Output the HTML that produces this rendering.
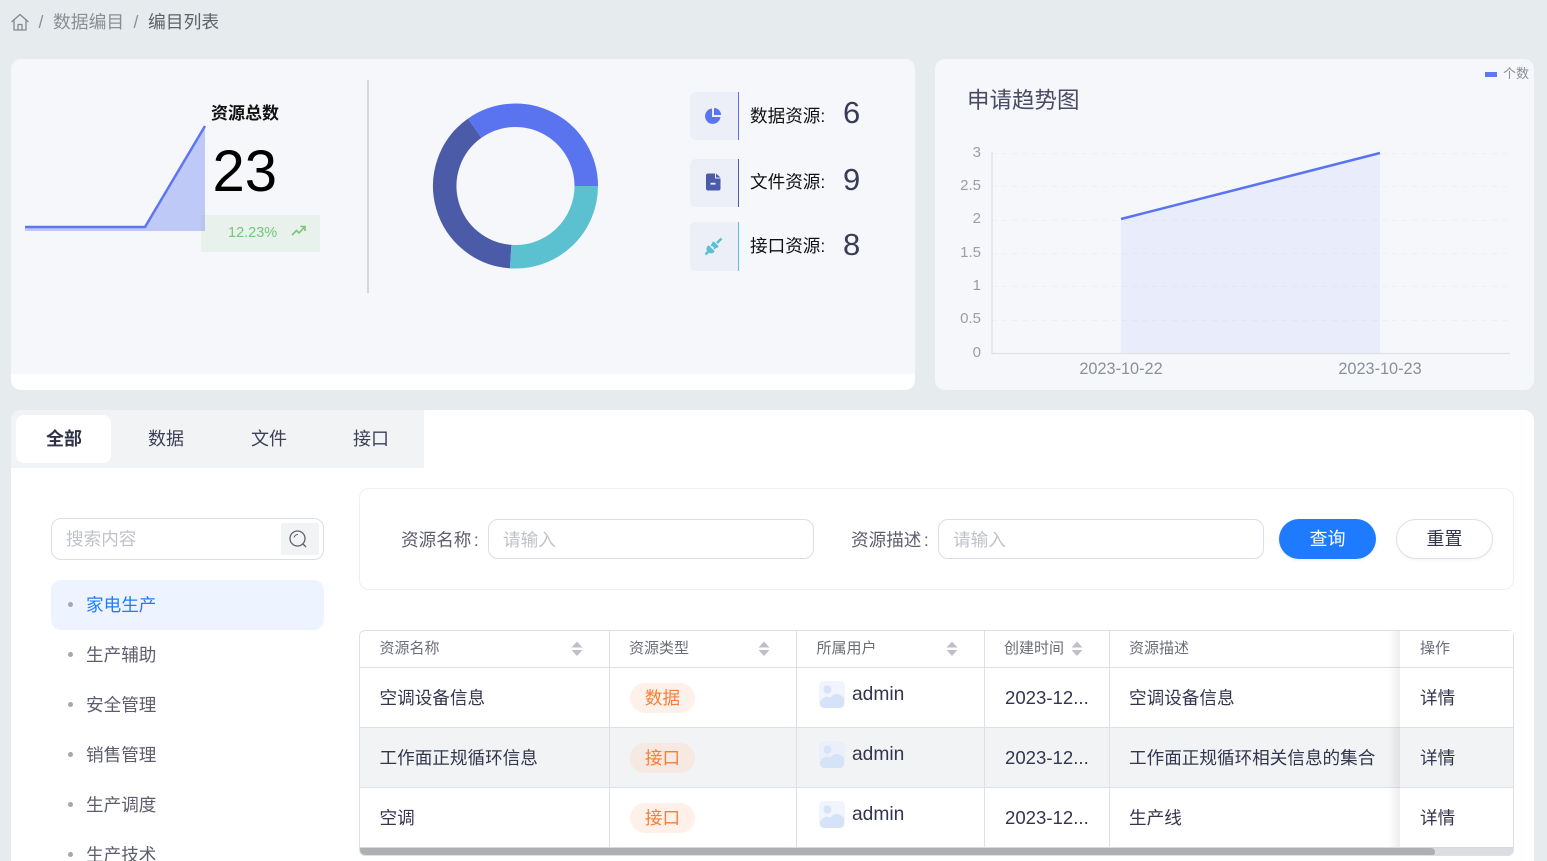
<!DOCTYPE html>
<html lang="zh-CN">
<head>
<meta charset="utf-8">
<title>编目列表</title>
<style>
html,body{margin:0;padding:0;width:1547px;height:861px;overflow:hidden;background:#e6ebee;}
body{position:relative;font-family:"Liberation Sans","Noto Sans CJK SC",sans-serif;color:#33354f;}
.a{position:absolute;box-sizing:border-box;}
.t{position:absolute;white-space:nowrap;line-height:24px;height:24px;font-size:17.6px;}
.h{font-size:15px;color:#6b6d78;}
.n{color:#5c5e6e;}
.dot{position:absolute;left:68px;width:5px;height:5px;border-radius:50%;background:#a4a7b0;}
.lb{color:#111;}
.num{font-size:31px;color:#3a3b57;line-height:36px;height:36px;}
.ic{position:absolute;left:690px;width:48px;background:#eceff7;border-radius:6px 0 0 6px;}
.tag{position:absolute;left:630px;width:65px;height:30px;border-radius:15px;text-align:center;line-height:30px;font-size:17.6px;color:#fb7d33;background:#fff1ea;}
.vl{position:absolute;width:1px;background:#dfdfe9;}
.hl{position:absolute;left:360px;width:1153px;height:1px;background:#dfdfe6;}
.ph{color:#c0c2c9;}
.c{margin-left:2.5px;}
</style>
</head>
<body>

<!-- breadcrumb -->
<svg class="a" style="left:10px;top:12px" width="20" height="20" viewBox="0 0 20 20" fill="none" stroke="#85888f" stroke-width="1.3" stroke-linejoin="round"><path d="M1.5 10 10 2.5 18.5 10"/><path d="M4 8v10h12V8"/><path d="M8 18v-5.5h4V18"/></svg>
<span class="t" style="left:38.500px;top:10px;color:#8d8f96">/</span>
<span class="t n" style="left:53px;top:10px;color:#8c8e95;font-size:17.8px">数据编目</span>
<span class="t" style="left:133.500px;top:10px;color:#8d8f96">/</span>
<span class="t" style="left:148px;top:10px;color:#60626a;font-size:17.8px">编目列表</span>

<!-- stats card -->
<div class="a" style="left:11px;top:59px;width:904px;height:331px;background:#fff;border-radius:10px;overflow:hidden"><div style="height:315px;background:#f5f7fb"></div></div>
<div class="a" style="left:201px;top:215px;width:119px;height:37px;background:#e8f1ec"></div>
<svg class="a" style="left:0;top:59px" width="368" height="200" viewBox="0 59 368 200">
<path d="M25 227H145L205 126V231H25Z" fill="#5a74f0" fill-opacity=".35"/>
<path d="M25 227H145L205 126" fill="none" stroke="#5e77f0" stroke-width="2.5"/>
</svg>
<span class="t" style="left:211px;top:102px;font-size:17px;font-weight:bold;color:#111">资源总数</span>
<span class="t" style="left:212.500px;top:140px;font-size:58px;line-height:64px;height:64px;color:#000">23</span>
<span class="t" style="left:228px;top:221px;font-size:14.500px;color:#74c777">12.23%</span>
<svg class="a" style="left:291px;top:224px" width="15" height="14" viewBox="0 0 15 14" fill="none" stroke="#74c777" stroke-width="1.6"><path d="M1 11 5.5 6.5 8 9 13.5 3"/><path d="M9.5 2.5H14V7"/></svg>
<div class="a" style="left:367px;top:80px;width:2px;height:213px;background:#d5d7df"></div>

<svg class="a" style="left:420px;top:90px" width="190" height="190" viewBox="420 90 190 190" fill="none" stroke-width="23.5">
<path d="M586.25 186A70.75 70.75 0 0 0 474.7 128.2" stroke="#5a74f0"/>
<path d="M474.7 128.2A70.75 70.75 0 0 0 510.7 256.6" stroke="#4c5ba8"/>
<path d="M510.7 256.6A70.75 70.75 0 0 0 586.25 186" stroke="#5bc0cf"/>
</svg>

<div class="ic" style="top:92px;height:48px;border-right:1.5px solid #5a74f0"></div>
<div class="ic" style="top:159px;height:48px;border-right:1.5px solid #4c5ba8"></div>
<div class="ic" style="top:222px;height:49px;border-right:1.5px solid #5bc0cf"></div>
<svg class="a" style="left:704px;top:107px" width="18" height="18" viewBox="0 0 18 18"><path d="M8 1.5A7.7 7.7 0 1 0 16.4 10H8Z" fill="#5a74f0"/><path d="M10 1V8H17A7 7 0 0 0 10 1Z" fill="#5a74f0"/></svg>
<svg class="a" style="left:706px;top:173px" width="15" height="18" viewBox="0 0 15 18"><path d="M2 .5H9V5.5H14.5V15.5A2 2 0 0 1 12.500 17.500H2A2 2 0 0 1 0 15.500V2.500A2 2 0 0 1 2 .5Z" fill="#4c5ba8"/><path d="M10 .5 14.500 4.500H10Z" fill="#4c5ba8"/><rect x="4.500" y="9.800" width="5" height="1.800" fill="#eceff7"/></svg>
<svg class="a" style="left:704px;top:237px" width="19" height="19" viewBox="0 0 19 19" fill="#5bc0cf" stroke="#5bc0cf"><path d="M9.500 5.500 13.500 9.500Q11.500 11 9.500 9 7.800 7.300 9.500 5.500Z" stroke-width="2" stroke-linejoin="round"/><path d="M13 6 17.500 1.500" stroke-width="2.500" fill="none"/><path d="M4.500 9.500 9.500 14.500Q7 16.500 4.500 14 2.500 12 4.500 9.500Z" stroke-width="2" stroke-linejoin="round"/><path d="M5 14 1.500 17.500" stroke-width="2.500" fill="none"/><path d="M7 9 8.500 7.500M10 12 11.500 10.500" stroke-width="1.500" fill="none"/></svg>

<span class="t lb" style="left:750px;top:104px">数据资源<span class="c" style="margin-left:0">:</span></span>
<span class="t num" style="left:843px;top:95px">6</span>
<span class="t lb" style="left:750px;top:170px">文件资源<span class="c" style="margin-left:0">:</span></span>
<span class="t num" style="left:843px;top:162px">9</span>
<span class="t lb" style="left:750px;top:234px">接口资源<span class="c" style="margin-left:0">:</span></span>
<span class="t num" style="left:843px;top:227px">8</span>

<!-- trend card -->
<div class="a" style="left:935px;top:59px;width:599px;height:331px;background:#f5f7fb;border-radius:10px"></div>
<span class="t" style="left:967px;top:87px;font-size:22.500px;line-height:28px;height:28px;color:#4a4b63">申请趋势图</span>
<div class="a" style="left:1485px;top:72px;width:12px;height:5px;background:#5f79f2"></div>
<span class="t" style="left:1503px;top:62px;font-size:13px;color:#8b8d97">个数</span>
<svg class="a" style="left:935px;top:130px" width="599" height="255" viewBox="935 130 599 255" fill="none">
<g stroke="#eff0f4" stroke-width="1" stroke-dasharray="5 5">
<path d="M992 153.500H1510M992 186.500H1510M992 220.500H1510M992 253.500H1510M992 286.500H1510M992 320.500H1510"/>
</g>
<path d="M1121 219.500 1380 153V353H1121Z" fill="#5c62ea" fill-opacity=".07"/>
<path d="M1121 219 1380 153" stroke="#5a74f0" stroke-width="2.500"/>
<path d="M992 152V353.500H1510" stroke="#dfe1e6" stroke-width="1.300"/>
<g font-family="Liberation Sans, sans-serif" font-size="15" fill="#9a9ca8" text-anchor="end">
<text x="981" y="157">3</text><text x="981" y="190">2.5</text><text x="981" y="223">2</text><text x="981" y="257">1.5</text><text x="981" y="290">1</text><text x="981" y="323">0.5</text><text x="981" y="357">0</text>
</g>
<g font-family="Liberation Sans, sans-serif" font-size="16.300" fill="#8c8f99" text-anchor="middle">
<text x="1121" y="374">2023-10-22</text><text x="1380" y="374">2023-10-23</text>
</g>
</svg>

<!-- main card -->
<div class="a" style="left:11px;top:410px;width:1523px;height:460px;background:#fff;border-radius:10px 10px 0 0"></div>
<div class="a" style="left:11px;top:410px;width:413px;height:58px;background:#f2f3f5;border-radius:10px 0 0 0"></div>
<div class="a" style="left:16px;top:415px;width:95px;height:48px;background:#fff;border-radius:8px"></div>
<span class="t" style="left:46px;top:427px;font-size:18px;font-weight:bold;color:#2f3146">全部</span>
<span class="t" style="left:148px;top:427px;font-size:18px;color:#3d3f58">数据</span>
<span class="t" style="left:251px;top:427px;font-size:18px;color:#3d3f58">文件</span>
<span class="t" style="left:353px;top:427px;font-size:18px;color:#3d3f58">接口</span>

<!-- sidebar -->
<div class="a" style="left:51px;top:518px;width:273px;height:42px;border:1px solid #dcdde6;border-radius:10px;background:#fff"></div>
<span class="t ph" style="left:66px;top:527px">搜索内容</span>
<div class="a" style="left:281px;top:523px;width:38px;height:32px;background:#f2f3f5;border-radius:2px"></div>
<svg class="a" style="left:288px;top:529px" width="20" height="20" viewBox="0 0 20 20" fill="none" stroke="#5f6168" stroke-width="1.300"><circle cx="9.500" cy="9.500" r="7.500"/><path d="M6 8.500Q7 5.500 10 5.500" stroke-width="1"/><path d="M15 15 18 18"/></svg>
<div class="a" style="left:51px;top:580px;width:273px;height:50px;background:#eef4ff;border-radius:10px"></div>
<div class="dot" style="top:602px"></div><span class="t" style="left:86px;top:593px;color:#1e7bff">家电生产</span>
<div class="dot" style="top:652px"></div><span class="t n" style="left:86px;top:643px">生产辅助</span>
<div class="dot" style="top:702px"></div><span class="t n" style="left:86px;top:693px">安全管理</span>
<div class="dot" style="top:752px"></div><span class="t n" style="left:86px;top:743px">销售管理</span>
<div class="dot" style="top:802px"></div><span class="t n" style="left:86px;top:793px">生产调度</span>
<div class="dot" style="top:852px"></div><span class="t n" style="left:86px;top:843px">生产技术</span>

<!-- filter -->
<div class="a" style="left:359px;top:488px;width:1155px;height:102px;border:1px solid #eeeff2;border-radius:10px"></div>
<span class="t n" style="left:401px;top:528px">资源名称<span class="c">:</span></span>
<div class="a" style="left:488px;top:519px;width:326px;height:40px;border:1px solid #dcdde6;border-radius:10px"></div>
<span class="t ph" style="left:503px;top:528px">请输入</span>
<span class="t n" style="left:851px;top:528px">资源描述<span class="c">:</span></span>
<div class="a" style="left:938px;top:519px;width:326px;height:40px;border:1px solid #dcdde6;border-radius:10px"></div>
<span class="t ph" style="left:953px;top:528px">请输入</span>
<div class="a" style="left:1279px;top:519px;width:97px;height:40px;background:#1e7bff;border-radius:20px;text-align:center;line-height:40px;font-size:18px;color:#fff;box-shadow:0 1px 3px rgba(0,0,0,.08)">查询</div>
<div class="a" style="left:1396px;top:519px;width:97px;height:40px;background:#fff;border:1px solid #dfe0e8;border-radius:20px;text-align:center;line-height:38px;font-size:18px;color:#33354f;box-shadow:0 1px 3px rgba(0,0,0,.05)">重置</div>

<!-- table -->
<div class="a" style="left:359px;top:630px;width:1155px;height:226px;border:1px solid #dfdfe9;border-radius:6px;overflow:hidden;background:#fff">
  <div class="a" style="left:0;top:97px;width:1153px;height:59px;background:#f2f3f5"></div>
  <div class="a" style="left:0;top:217px;width:1153px;height:8px;background:#dcdde1"></div>
  <div class="a" style="left:0;top:217px;width:1075px;height:8px;background:#aeafb3;border-radius:0 4px 4px 4px"></div>
</div>
<div class="hl" style="top:667px"></div>
<div class="hl" style="top:727px"></div>
<div class="hl" style="top:787px"></div>
<div class="hl" style="top:847px;background:#d8d9de"></div>
<div class="vl" style="left:609px;top:631px;height:216px"></div>
<div class="vl" style="left:796px;top:631px;height:216px"></div>
<div class="vl" style="left:984px;top:631px;height:216px"></div>
<div class="vl" style="left:1109px;top:631px;height:216px"></div>
<div class="a" style="left:1388px;top:631px;width:12px;height:216px;background:linear-gradient(to right,rgba(0,0,0,0),rgba(0,0,0,.07))"></div>
<div class="a" style="left:1400px;top:668px;width:113px;height:59px;background:#fff"></div>
<div class="a" style="left:1400px;top:631px;width:113px;height:36px;background:#fff"></div>
<div class="a" style="left:1400px;top:728px;width:113px;height:59px;background:#f2f3f5"></div>
<div class="a" style="left:1400px;top:788px;width:113px;height:59px;background:#fff"></div>

<span class="t h" style="left:379.500px;top:637px">资源名称</span>
<span class="t h" style="left:629px;top:637px">资源类型</span>
<span class="t h" style="left:816.500px;top:637px">所属用户</span>
<span class="t h" style="left:1004px;top:637px">创建时间</span>
<span class="t h" style="left:1129px;top:637px">资源描述</span>
<span class="t h" style="left:1420px;top:637px">操作</span>
<svg class="a" style="left:0;top:0" width="1547" height="861" viewBox="0 0 1547 861" fill="#bfc0c6"><path d="M571.500 647.500 577 641.500 582.500 647.500ZM571.500 650 577 656 582.500 650Z"/><path d="M758.500 647.500 764 641.500 769.500 647.500ZM758.500 650 764 656 769.500 650Z"/><path d="M946.500 647.500 952 641.500 957.500 647.500ZM946.500 650 952 656 957.500 650Z"/><path d="M1071.500 647.500 1077 641.500 1082.500 647.500ZM1071.500 650 1077 656 1082.500 650Z"/></svg>

<span class="t" style="left:379.500px;top:686px">空调设备信息</span>
<div class="tag" style="top:683px">数据</div>
<svg class="a" style="left:819px;top:681px" width="26" height="27" viewBox="0 0 26 27"><rect width="26" height="27" rx="5" fill="#f0f4fc"/><circle cx="8.500" cy="8.500" r="4" fill="#d6e2f7"/><path d="M1 21Q6 13 11 17 17 9 25 17V23A4 4 0 0 1 21 27H5A4 4 0 0 1 1 23Z" fill="#d6e2f7"/></svg>
<span class="t" style="left:852px;top:683px;font-size:19.200px">admin</span>
<span class="t" style="left:1005px;top:686px;font-size:18.600px">2023-12...</span>
<span class="t" style="left:1129px;top:686px">空调设备信息</span>
<span class="t" style="left:1420px;top:686px">详情</span>

<span class="t" style="left:379.500px;top:746px">工作面正规循环信息</span>
<div class="tag" style="top:743px;background:#f5e9e2">接口</div>
<svg class="a" style="left:819px;top:741px" width="26" height="27" viewBox="0 0 26 27"><rect width="26" height="27" rx="5" fill="#eaeff9"/><circle cx="8.500" cy="8.500" r="4" fill="#d6e2f7"/><path d="M1 21Q6 13 11 17 17 9 25 17V23A4 4 0 0 1 21 27H5A4 4 0 0 1 1 23Z" fill="#d6e2f7"/></svg>
<span class="t" style="left:852px;top:743px;font-size:19.200px">admin</span>
<span class="t" style="left:1005px;top:746px;font-size:18.600px">2023-12...</span>
<span class="t" style="left:1129px;top:746px">工作面正规循环相关信息的集合</span>
<span class="t" style="left:1420px;top:746px">详情</span>

<span class="t" style="left:379.500px;top:806px">空调</span>
<div class="tag" style="top:803px">接口</div>
<svg class="a" style="left:819px;top:801px" width="26" height="27" viewBox="0 0 26 27"><rect width="26" height="27" rx="5" fill="#f0f4fc"/><circle cx="8.500" cy="8.500" r="4" fill="#d6e2f7"/><path d="M1 21Q6 13 11 17 17 9 25 17V23A4 4 0 0 1 21 27H5A4 4 0 0 1 1 23Z" fill="#d6e2f7"/></svg>
<span class="t" style="left:852px;top:803px;font-size:19.200px">admin</span>
<span class="t" style="left:1005px;top:806px;font-size:18.600px">2023-12...</span>
<span class="t" style="left:1129px;top:806px">生产线</span>
<span class="t" style="left:1420px;top:806px">详情</span>

</body>
</html>
